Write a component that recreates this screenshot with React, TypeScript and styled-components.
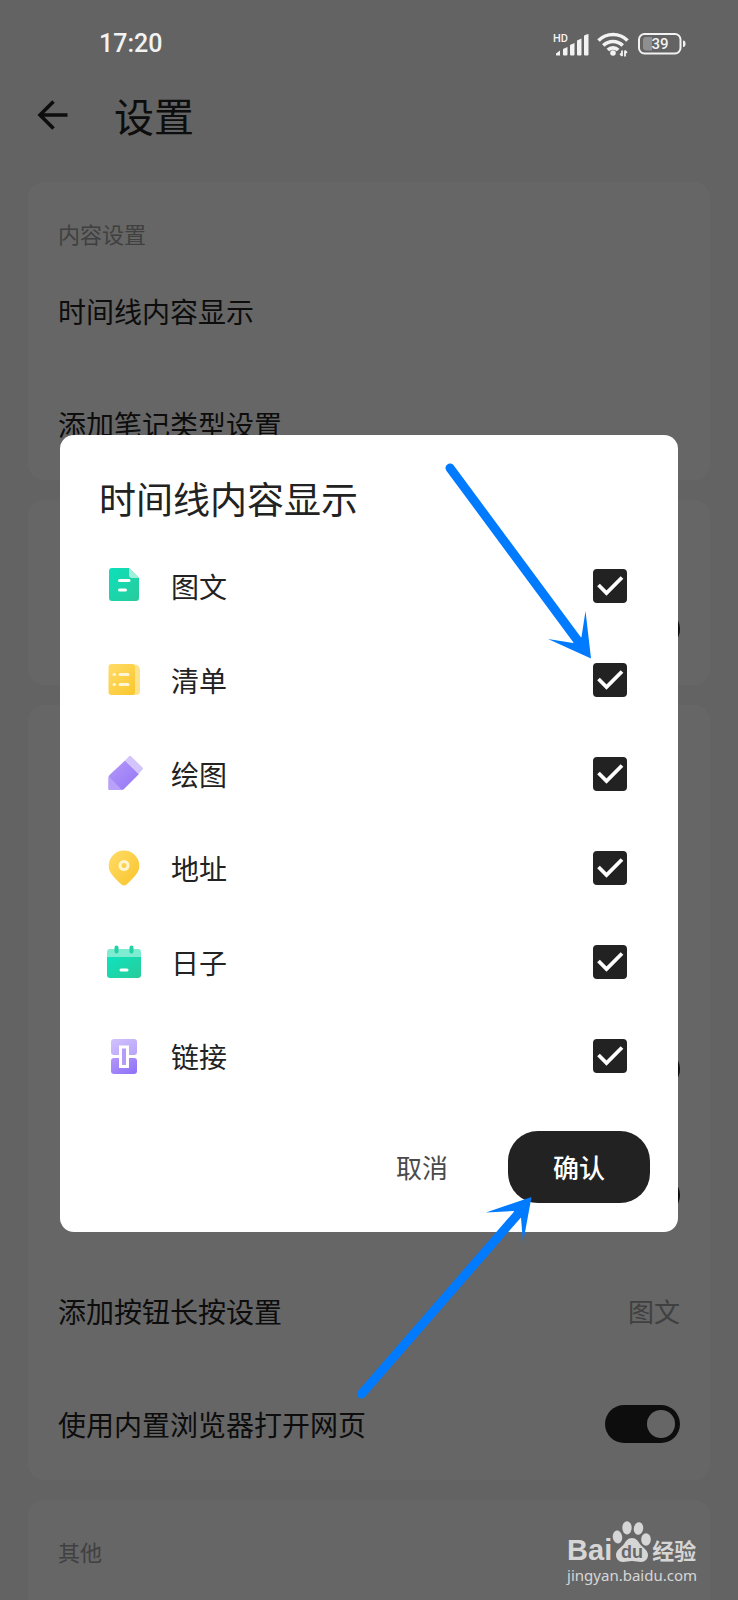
import React from "react";
import styled, { createGlobalStyle } from "styled-components";

const INK = "#222222";
const BLUE = "#007aff";
const FONT = `"Noto Sans CJK SC", sans-serif`;

const GlobalStyle = createGlobalStyle`
  *, *::before, *::after { box-sizing: border-box; }
  body { margin: 0; background: #636363; font-family: ${FONT}; color: ${INK}; }
  button, input { font: inherit; margin: 0; }
`;

/* ---------- settings page ---------- */

const Page = styled.div`
  position: relative;
  display: flex;
  flex-direction: column;
  min-height: 100vh;
  background: #f7f7f7;
`;

const StatusBar = styled.div`
  position: relative;
  z-index: 2;
  display: flex;
  align-items: center;
  justify-content: space-between;
  height: 88px;
  padding: 0 52px 0 99px;
  color: #f2f2f2;
`;

const Clock = styled.time`
  font-family: Roboto, sans-serif;
  font-size: 25px;
  font-weight: 500;
  line-height: 28px;
`;

const StatusIcons = styled.div`
  display: flex;
  align-items: center;
  gap: 7px;
`;

const Header = styled.header`
  display: flex;
  align-items: center;
  gap: 44px;
  height: 58px;
  padding: 0 36px;
  margin-bottom: 36px;
`;

const BackButton = styled.button`
  display: flex;
  padding: 0;
  border: 0;
  background: none;
  color: ${INK};
`;

const PageTitle = styled.h1`
  margin: 0;
  padding-bottom: 4px;
  font-size: 40px;
  font-weight: 400;
  line-height: 54px;
`;

const Cards = styled.main`
  display: flex;
  flex: 1;
  flex-direction: column;
  gap: 20px;
  padding: 0 28px;
`;

const Card = styled.section<{ $last?: boolean }>`
  flex: ${(p) => (p.$last ? "1" : "none")};
  padding: 34px 30px 0;
  border-radius: ${(p) => (p.$last ? "16px 16px 0 0" : "16px")};
  background: #ffffff;
`;

const CardLabel = styled.h2`
  height: 38px;
  margin: 0;
  font-size: 22px;
  font-weight: 400;
  line-height: 34px;
  color: #a0a0a0;
`;

const Row = styled.div<{ $height?: number }>`
  display: flex;
  align-items: center;
  justify-content: space-between;
  height: ${(p) => p.$height ?? 113}px;
  font-size: 28px;
  line-height: 40px;
`;

const RowValue = styled.span`
  font-size: 26px;
  color: #a0a0a0;
`;

const Switch = styled.input.attrs({ type: "checkbox", role: "switch" })`
  display: flex;
  align-items: center;
  justify-content: flex-end;
  width: 75px;
  height: 38px;
  padding: 0 5px;
  appearance: none;
  border-radius: 19px;
  background: ${INK};

  &::before {
    content: "";
    width: 28px;
    height: 28px;
    border-radius: 50%;
    background: #ffffff;
  }

  &:not(:checked) {
    justify-content: flex-start;
    background: #cccccc;
  }
`;

/* ---------- dialog ---------- */

const Scrim = styled.div`
  position: absolute;
  inset: 0;
  z-index: 1;
  display: flex;
  align-items: center;
  padding: 67px 60px 0;
  background: rgba(0, 0, 0, 0.6);
`;

const Dialog = styled.form`
  position: relative;
  flex: 1;
  padding: 39px 28px 29px 0;
  border-radius: 14px;
  background: #ffffff;
`;

const DialogTitle = styled.h2`
  margin: 0 0 17px;
  padding-left: 39px;
  font-size: 37px;
  font-weight: 400;
  line-height: 48px;
`;

const Option = styled.label`
  display: flex;
  align-items: center;
  gap: 29px;
  height: 94px;
  padding: 0 23px 0 46px;
  font-size: 28px;
  line-height: 40px;
`;

const OptionName = styled.span`
  flex: 1;
`;

const CheckCell = styled.span`
  display: grid;

  & > * {
    grid-area: 1 / 1;
  }

  & > svg {
    pointer-events: none;
  }

  & > input:not(:checked) + svg {
    display: none;
  }
`;

const Checkbox = styled.input.attrs({ type: "checkbox" })`
  width: 34px;
  height: 34px;
  appearance: none;
  border: 2px solid ${INK};
  border-radius: 4px;

  &:checked {
    background: ${INK};
  }
`;

const Actions = styled.div`
  display: flex;
  justify-content: flex-end;
  gap: 15px;
  margin-top: 28px;
`;

const ActionButton = styled.button<{ $primary?: boolean }>`
  width: 142px;
  height: 72px;
  padding: 0;
  border: 0;
  border-radius: 30px;
  background: ${(p) => (p.$primary ? INK : "transparent")};
  color: ${(p) => (p.$primary ? "#ffffff" : "#4a4a4a")};
  font-size: 26px;
  font-weight: ${(p) => (p.$primary ? 500 : 400)};
  line-height: 40px;
`;

const TopArrow = styled.svg`
  position: absolute;
  top: 25px;
  right: 78px;
  pointer-events: none;
`;

const BottomArrow = styled.svg`
  position: absolute;
  right: 138px;
  bottom: -168px;
  pointer-events: none;
`;

/* ---------- watermark ---------- */

const Watermark = styled.div`
  position: absolute;
  right: 41px;
  bottom: 13px;
  z-index: 2;
  color: #d6d6d6;
`;

const Brand = styled.div`
  display: flex;
  align-items: flex-end;
  height: 42px;
`;

const BrandLatin = styled.span`
  font-family: "Liberation Sans", sans-serif;
  font-size: 29px;
  font-weight: 700;
  line-height: 26px;
`;

const BrandHan = styled.span`
  font-size: 22px;
  font-weight: 700;
  line-height: 28px;
`;

const Site = styled.div`
  font-family: "Noto Sans", sans-serif;
  font-size: 15px;
  line-height: 24px;
`;

/* ---------- drawings ---------- */

const Signal = () => (
  <svg width="36" height="28" viewBox="0 -4 36 28" fill="#f2f2f2">
    <text x="0" y="8" fontSize="11" fontWeight="500" fontFamily="Roboto, sans-serif">HD</text>
    <path d="M3 19.500l4-3v5H3.500Q3 21.500 3 20.500z M10 15l4.500-2V20.500q0 1-1 1H11q-1 0-1-1z M17 11l4.500-2V20.500q0 1-1 1H18q-1 0-1-1z M24 6.500l4.500-2v16q0 1-1 1H25q-1 0-1-1z M31 2q0-1 4.500-2V20.500q0 1-1 1H32q-1 0-1-1z" />
  </svg>
);

const Wifi = () => (
  <svg width="35" height="26" viewBox="0 0 35 26" fill="none" stroke="#f2f2f2" strokeWidth="3.600">
    <path d="M2.500 9.500a20.500 20.500 0 0 1 29 0" />
    <path d="M7.300 14.600a13.700 13.700 0 0 1 19.400 0" />
    <path d="M11.800 19a7.400 7.400 0 0 1 10.400 0" />
    <circle cx="17" cy="22" r="2.800" fill="#f2f2f2" stroke="none" />
    <path d="M26 19.500v5.500M24.200 22.500L26 25M29 25.500v-6M30.800 22L29 19.500" strokeWidth="1.800" />
  </svg>
);

const Battery = () => (
  <svg width="48" height="22" viewBox="0 0 48 22">
    <rect x="1" y="1" width="41.500" height="19.500" rx="5.500" fill="none" stroke="#f2f2f2" strokeWidth="2" />
    <path d="M8 4h6v13.500H8q-3 0-3-3V7q0-3 3-3z" fill="#8f8f8f" />
    <path d="M45 7.500q2.500 0 2.500 3.300T45 14z" fill="#f2f2f2" />
    <text x="22" y="16" fontSize="15" fontWeight="500" textAnchor="middle" fill="#f2f2f2" fontFamily="Roboto, sans-serif">39</text>
  </svg>
);

const BackArrow = () => (
  <svg width="34" height="34" viewBox="0 0 34 34" fill="none" stroke="currentColor" strokeWidth="3.600">
    <path d="M31.500 15H4M17.500 1.500L4 15l13.500 13.500" />
  </svg>
);

const Tick = () => (
  <svg width="34" height="34" viewBox="0 0 34 34" fill="none" stroke="#ffffff" strokeWidth="3.800">
    <path d="M5.500 16L13.500 24L29 8.500" />
  </svg>
);

const NoteIcon = () => (
  <svg width="36" height="36" viewBox="0 0 36 36">
    <defs>
      <linearGradient id="note" x1="0" y1="0" x2="1" y2="1">
        <stop stopColor="#0ce0bb" /><stop offset="1" stopColor="#2acb9b" />
      </linearGradient>
    </defs>
    <path d="M6 0h17l10 10v20q0 3-3 3H6q-3 0-3-3V3q0-3 3-3z" fill="url(#note)" />
    <path d="M23 0l10 10h-7q-3 0-3-3z" fill="#a0f0dc" />
    <path d="M13.500 12.500h9.500M13.500 22h6" stroke="#fff" strokeWidth="3" strokeLinecap="round" />
  </svg>
);

const ListIcon = () => (
  <svg width="36" height="36" viewBox="0 0 36 36">
    <defs>
      <linearGradient id="list" x1="0" y1="0" x2="1" y2="1">
        <stop stopColor="#ffdb69" /><stop offset="1" stopColor="#fac72c" />
      </linearGradient>
    </defs>
    <path d="M26 2.500h4q4 2 4 5v22q0 3.500-4 3.500h-4z" fill="#ffe38c" />
    <rect x="2.500" y="2" width="26.500" height="31" rx="3" fill="url(#list)" />
    <path d="M14 12.500h8M14 22.500h8M8 12.500h.5M8 22.500h.5" stroke="#fff6d6" strokeWidth="3" strokeLinecap="round" />
  </svg>
);

const PencilIcon = () => (
  <svg width="36" height="36" viewBox="0 0 36 36" overflow="visible">
    <defs>
      <linearGradient id="pencil" x1="0" y1="0" x2="1" y2="1">
        <stop stopColor="#b698f8" /><stop offset="1" stopColor="#9276f6" />
      </linearGradient>
    </defs>
    <path d="M19 4.500L33 18L18 33q-1 1-2.500 1H4q-1.500 0-1.500-1.500V21.500q0-1.500 1-2.500z" fill="url(#pencil)" />
    <path d="M2.700 20.500L16 34H4q-1.500 0-1.500-1.500z" fill="#b9a1fa" />
    <path d="M23 .3q1-1 2 0L36.500 11.500q1 1 0 2L32.500 18L19 4.500z" fill="#d3c5fc" />
  </svg>
);

const PinIcon = () => (
  <svg width="36" height="36" viewBox="0 0 36 36">
    <defs>
      <linearGradient id="pin" x1="0" y1="0" x2="1" y2="1">
        <stop stopColor="#ffdc68" /><stop offset="1" stopColor="#f9c42b" />
      </linearGradient>
    </defs>
    <path d="M18 .5a15.300 15.300 0 0 1 15.300 15.300c0 6-3.300 10-12.800 18.700q-2.500 2-5 0C6 25.800 2.700 21.800 2.700 15.800A15.300 15.300 0 0 1 18 .5z" fill="url(#pin)" />
    <circle cx="18" cy="15.500" r="4" fill="none" stroke="#fff5cf" strokeWidth="3" />
  </svg>
);

const CalendarIcon = () => (
  <svg width="36" height="36" viewBox="0 0 36 36">
    <defs>
      <linearGradient id="calendar" x1="0" y1="0" x2="1" y2="1">
        <stop stopColor="#0ee3bf" /><stop offset="1" stopColor="#2acb98" />
      </linearGradient>
    </defs>
    <path d="M4 5h28q3 0 3 3v6H1V8q0-3 3-3z" fill="#7eecd0" />
    <path d="M1 13h34v18q0 3-3 3H4q-3 0-3-3z" fill="url(#calendar)" />
    <path d="M10.500 3.500v4M25.500 3.500v4" stroke="#22d1a5" strokeWidth="4" strokeLinecap="round" />
    <path d="M15 26h6" stroke="#fff" strokeWidth="3" strokeLinecap="round" />
  </svg>
);

const LinkIcon = () => (
  <svg width="36" height="36" viewBox="0 0 36 36">
    <defs>
      <linearGradient id="linkTop" x1="0" y1="0" x2="1" y2="1">
        <stop stopColor="#d1c3fc" /><stop offset="1" stopColor="#b7a2fa" />
      </linearGradient>
      <linearGradient id="linkBottom" x1="0" y1="0" x2="1" y2="1">
        <stop stopColor="#b396fa" /><stop offset="1" stopColor="#8d70f7" />
      </linearGradient>
    </defs>
    <rect x="5" y="1" width="26" height="16" rx="3" fill="url(#linkTop)" />
    <rect x="5" y="20" width="26" height="16" rx="3" fill="url(#linkBottom)" />
    <rect x="14.500" y="9" width="7" height="19.500" fill="#b49cf8" stroke="#fff" strokeWidth="3" />
  </svg>
);

const Paw = () => (
  <svg width="40" height="42" viewBox="0 0 40 42" fill="#d6d6d6">
    <ellipse cx="5.500" cy="16" rx="4.700" ry="6.500" transform="rotate(-8 5.500 16)" />
    <ellipse cx="15" cy="6.800" rx="4.700" ry="6.600" />
    <ellipse cx="26.500" cy="7.500" rx="4.700" ry="6.300" transform="rotate(10 26.500 7.500)" />
    <ellipse cx="34" cy="18.500" rx="4.800" ry="6.200" />
    <path d="M20 17c4 0 6 3 8 6s8 6 8 11c0 4-3 7-7 7-3 0-5-1-9-1s-6 1-9 1c-4 0-7-3-7-7 0-5 6-8 8-11s4-6 8-6z" />
    <text x="20" y="37" fontSize="18" fontWeight="700" textAnchor="middle" fill="#676767" fontFamily="Liberation Sans, sans-serif">du</text>
  </svg>
);

const options = [
  { name: "图文", Icon: NoteIcon },
  { name: "清单", Icon: ListIcon },
  { name: "绘图", Icon: PencilIcon },
  { name: "地址", Icon: PinIcon },
  { name: "日子", Icon: CalendarIcon },
  { name: "链接", Icon: LinkIcon },
];

export default function App() {
  return (
    <>
      <GlobalStyle />
      <Page>
        <StatusBar>
          <Clock>17:20</Clock>
          <StatusIcons>
            <Signal />
            <Wifi />
            <Battery />
          </StatusIcons>
        </StatusBar>

        <Header>
          <BackButton type="button" aria-label="返回">
            <BackArrow />
          </BackButton>
          <PageTitle>设置</PageTitle>
        </Header>

        <Cards>
          <Card>
            <CardLabel>内容设置</CardLabel>
            <Row>时间线内容显示</Row>
            <Row>添加笔记类型设置</Row>
          </Card>
          <Card>
            <CardLabel />
            <Row>
              <span />
              <Switch aria-label="开关" defaultChecked />
            </Row>
          </Card>
          <Card>
            <CardLabel />
            <Row />
            <Row />
            <Row $height={132}>
              <span />
              <Switch aria-label="开关" defaultChecked />
            </Row>
            <Row $height={119}>
              <span />
              <Switch aria-label="开关" defaultChecked />
            </Row>
            <Row>
              添加按钮长按设置
              <RowValue>图文</RowValue>
            </Row>
            <Row>
              <label htmlFor="browser">使用内置浏览器打开网页</label>
              <Switch id="browser" defaultChecked />
            </Row>
          </Card>
          <Card $last>
            <CardLabel>其他</CardLabel>
          </Card>
        </Cards>

        <Scrim>
          <Dialog
            role="dialog"
            aria-labelledby="dialog-title"
            onSubmit={(e: React.FormEvent) => e.preventDefault()}
          >
            <DialogTitle id="dialog-title">时间线内容显示</DialogTitle>
            {options.map(({ name, Icon }) => (
              <Option key={name}>
                <Icon />
                <OptionName>{name}</OptionName>
                <CheckCell>
                  <Checkbox defaultChecked />
                  <Tick />
                </CheckCell>
              </Option>
            ))}
            <Actions>
              <ActionButton type="button">取消</ActionButton>
              <ActionButton type="submit" $primary>确认</ActionButton>
            </Actions>

            <TopArrow width="160" height="205" viewBox="0 0 160 205" fill={BLUE}>
              <path d="M10 8L138 181" stroke={BLUE} strokeWidth="9" strokeLinecap="round" />
              <path d="M151 198.500L108 179L133 183L141.500 177L145.500 151z" />
            </TopArrow>
            <BottomArrow width="190" height="210" viewBox="0 0 190 210" fill={BLUE}>
              <path d="M11.500 204L168 24" stroke={BLUE} strokeWidth="9" strokeLinecap="round" />
              <path d="M181.500 7L136 22.500L163.500 21L171 27.500L173 53z" />
            </BottomArrow>
          </Dialog>
        </Scrim>

        <Watermark>
          <Brand>
            <BrandLatin>Bai</BrandLatin>
            <Paw />
            <BrandHan>经验</BrandHan>
          </Brand>
          <Site>jingyan.baidu.com</Site>
        </Watermark>
      </Page>
    </>
  );
}
